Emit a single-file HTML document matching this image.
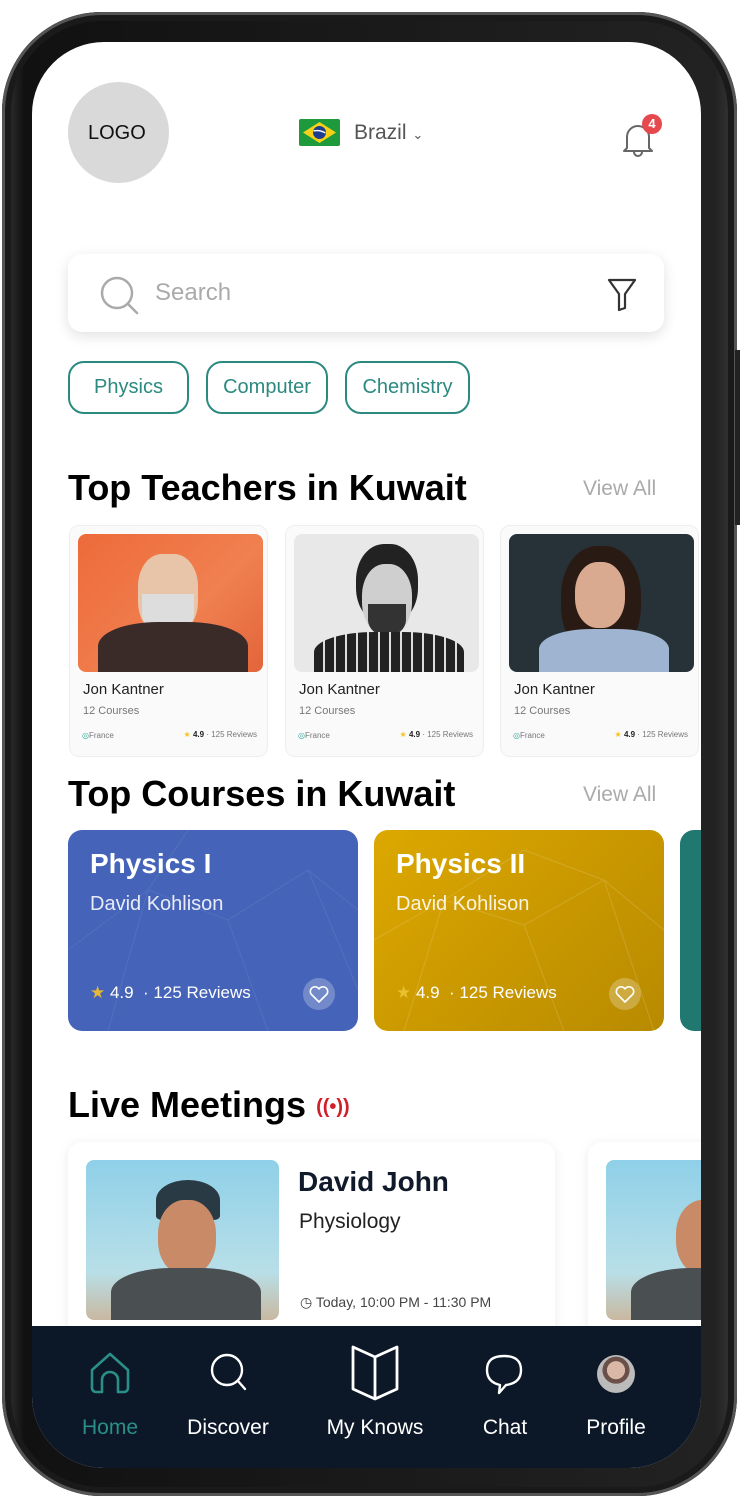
<!DOCTYPE html>
<html><head><meta charset="utf-8">
<style>
*{margin:0;padding:0;box-sizing:border-box}
body{width:740px;height:1498px;background:#fff;font-family:"Liberation Sans",sans-serif;position:relative;overflow:hidden}
.abs{position:absolute}
.frame{left:2px;top:12px;width:735px;height:1484px;border-radius:100px;background:linear-gradient(90deg,#3a3a3a,#111 3%,#222 97%,#3a3a3a);box-shadow:inset 0 0 0 3px #555,inset 0 0 0 9px #1a1a1a}
.screen{left:32px;top:42px;width:669px;height:1426px;border-radius:72px;background:#fff;overflow:hidden}
.t{position:absolute;white-space:nowrap}
.tcard{position:absolute;top:483px;width:199px;height:232px;border:1px solid #eee;border-radius:10px;background:#fafafa}
.tcard .ph{position:absolute;left:8px;top:8px;width:185px;height:138px;border-radius:8px;overflow:hidden}
.tcard .nm{left:13px;top:155px;font-size:15px;color:#222}
.tcard .cr{left:13px;top:179px;font-size:11px;color:#777}
.tcard .fr{left:12px;top:205px;font-size:8px;color:#777}
.tcard .rv{right:10px;top:204px;font-size:8px;color:#777}
.ccard{position:absolute;top:788px;width:290px;height:201px;border-radius:14px;overflow:hidden}
.ccard .h{left:22px;top:18px;font-size:28px;color:#fff;font-weight:bold}
.ccard .s{left:22px;top:63px;font-size:20px;color:rgba(255,255,255,.88)}
.ccard .r{left:22px;top:153px;font-size:17px;color:#fff}
.heart{position:absolute;left:235px;top:148px;width:32px;height:32px;border-radius:50%;background:rgba(255,255,255,.25)}
.chip{position:absolute;top:319px;height:53px;border:2px solid #2b8a80;border-radius:16px;color:#2b8a80;font-size:20px;line-height:49px;text-align:center}
.nav{left:0;top:1284px;width:669px;height:142px;background:#0c1828}
.nl{position:absolute;top:1374px;font-size:21px;color:#fff;text-align:center}
</style></head><body>
<div class="abs frame"></div>
<div class="abs" style="left:735px;top:350px;width:5px;height:175px;background:#222"></div>
<div class="abs screen">
  <div class="abs" style="left:36px;top:40px;width:101px;height:101px;border-radius:50%;background:#d9d9d9"></div>
  <div class="t" style="left:56px;top:80px;font-size:20px;color:#111">LOGO</div>
  <svg class="abs" style="left:267px;top:77px" width="41" height="27" viewBox="0 0 41 27"><rect width="41" height="27" rx="2" fill="#1e9a3c"/><path d="M20.5 3 L37 13.5 L20.5 24 L4 13.5Z" fill="#f7d117"/><circle cx="20.5" cy="13.5" r="6.5" fill="#1d3e8f"/><path d="M14.5 12 Q20.5 10.5 26.5 14" stroke="#fff" stroke-width="1.3" fill="none"/></svg>
  <div class="t" style="left:322px;top:79px;font-size:21px;color:#555">Brazil <span style="font-size:13px">⌄</span></div>
  <svg class="abs" style="left:588px;top:76px" width="36" height="42" viewBox="0 0 36 42"><path d="M7 30 V19 a11 11 0 0 1 22 0 V30 l3 3 H4 Z" fill="none" stroke="#666" stroke-width="2" stroke-linejoin="round"/><path d="M14 34 a4 4 0 0 0 8 0" fill="none" stroke="#666" stroke-width="2"/></svg>
  <div class="abs" style="left:610px;top:72px;width:20px;height:20px;border-radius:50%;background:#e5484d;color:#fff;font-size:13px;text-align:center;line-height:20px;font-weight:bold">4</div>

  <div class="abs" style="left:36px;top:212px;width:596px;height:78px;border-radius:14px;background:#fff;box-shadow:0 4px 14px rgba(0,0,0,.12)"></div>
  <svg class="abs" style="left:67px;top:233px" width="42" height="42" viewBox="0 0 42 42"><circle cx="18" cy="18" r="15" fill="none" stroke="#aaa" stroke-width="2.5"/><path d="M29 29 L38 38" stroke="#aaa" stroke-width="2.5" stroke-linecap="round"/></svg>
  <div class="t" style="left:123px;top:237px;font-size:24px;color:#aaa">Search</div>
  <svg class="abs" style="left:574px;top:235px" width="32" height="36" viewBox="0 0 32 36"><path d="M3 3 H29 L19 17 V31 L13 33 V17 Z" fill="none" stroke="#333" stroke-width="2.2" stroke-linejoin="round"/></svg>

  <div class="chip" style="left:36px;width:121px">Physics</div>
  <div class="chip" style="left:174px;width:122px">Computer</div>
  <div class="chip" style="left:313px;width:125px">Chemistry</div>

  <div class="t" style="left:36px;top:425px;font-size:36px;font-weight:bold;color:#000">Top Teachers in Kuwait</div>
  <div class="t" style="left:551px;top:435px;font-size:21px;color:#aaa">View All</div>

  <div class="tcard" style="left:37px"><div class="ph" style="background:linear-gradient(135deg,#ee6a3a,#f08050 60%,#e2643a)">
    <div class="abs" style="left:60px;top:20px;width:60px;height:80px;border-radius:40%;background:#e8c4a8"></div>
    <div class="abs" style="left:64px;top:60px;width:52px;height:40px;border-radius:0 0 50% 50%;background:#ddd"></div>
    <div class="abs" style="left:20px;top:88px;width:150px;height:60px;border-radius:40% 40% 0 0;background:#3a2a28"></div></div>
    <div class="t nm">Jon Kantner</div><div class="t cr">12 Courses</div><div class="t fr"><span style="color:#3aa89b">◎</span>France</div><div class="t rv"><span style="color:#f5c518">★</span> <b style="color:#222">4.9</b> · 125 Reviews</div></div>
  <div class="tcard" style="left:253px"><div class="ph" style="background:#e8e8e8">
    <div class="abs" style="left:62px;top:10px;width:62px;height:80px;border-radius:45%;background:#222"></div>
    <div class="abs" style="left:68px;top:30px;width:50px;height:70px;border-radius:45%;background:#cfcfcf"></div>
    <div class="abs" style="left:74px;top:70px;width:38px;height:32px;border-radius:0 0 50% 50%;background:#333"></div>
    <div class="abs" style="left:20px;top:98px;width:150px;height:50px;border-radius:40% 40% 0 0;background:repeating-linear-gradient(90deg,#222 0 9px,#ddd 9px 11px)"></div></div>
    <div class="t nm">Jon Kantner</div><div class="t cr">12 Courses</div><div class="t fr"><span style="color:#3aa89b">◎</span>France</div><div class="t rv"><span style="color:#f5c518">★</span> <b style="color:#222">4.9</b> · 125 Reviews</div></div>
  <div class="tcard" style="left:468px"><div class="ph" style="background:#263238">
    <div class="abs" style="left:52px;top:12px;width:80px;height:110px;border-radius:45%;background:#2a1a14"></div>
    <div class="abs" style="left:66px;top:28px;width:50px;height:66px;border-radius:45%;background:#d9a990"></div>
    <div class="abs" style="left:30px;top:95px;width:130px;height:50px;border-radius:40% 40% 0 0;background:#9fb4d0"></div></div>
    <div class="t nm">Jon Kantner</div><div class="t cr">12 Courses</div><div class="t fr"><span style="color:#3aa89b">◎</span>France</div><div class="t rv"><span style="color:#f5c518">★</span> <b style="color:#222">4.9</b> · 125 Reviews</div></div>

  <div class="t" style="left:36px;top:731px;font-size:36px;font-weight:bold;color:#000">Top Courses in Kuwait</div>
  <div class="t" style="left:551px;top:741px;font-size:21px;color:#aaa">View All</div>

  <div class="ccard" style="left:36px;background:#4563b8">
    <svg class="abs" style="left:0;top:0" width="290" height="201"><path d="M0 120 L80 60 L160 90 L240 40 L290 80 M40 201 L80 60 M160 90 L200 201 M240 40 L290 160 M80 60 L120 0" stroke="rgba(255,255,255,.08)" fill="none"/></svg>
    <div class="t h">Physics I</div><div class="t s">David Kohlison</div>
    <div class="t r"><span style="color:#e5b83a">★</span> 4.9 &nbsp;· 125 Reviews</div>
    <div class="heart"><svg width="32" height="32" viewBox="0 0 32 32"><path d="M16 24 L8 16 a4.5 4.5 0 0 1 8-5 a4.5 4.5 0 0 1 8 5 Z" fill="none" stroke="#fff" stroke-width="1.6" stroke-linejoin="round"/></svg></div>
  </div>
  <div class="ccard" style="left:342px;background:linear-gradient(135deg,#dca800,#b88a00)">
    <svg class="abs" style="left:0;top:0" width="290" height="201"><path d="M0 110 L70 70 L150 95 L230 50 L290 100 M30 201 L70 70 M150 95 L190 201 M230 50 L280 201 M70 70 L150 20 L230 50" stroke="rgba(255,255,255,.15)" fill="none"/></svg>
    <div class="t h">Physics II</div><div class="t s">David Kohlison</div>
    <div class="t r"><span style="color:#e8c030">★</span> 4.9 &nbsp;· 125 Reviews</div>
    <div class="heart"><svg width="32" height="32" viewBox="0 0 32 32"><path d="M16 24 L8 16 a4.5 4.5 0 0 1 8-5 a4.5 4.5 0 0 1 8 5 Z" fill="none" stroke="#fff" stroke-width="1.6" stroke-linejoin="round"/></svg></div>
  </div>
  <div class="ccard" style="left:648px;background:#207870"></div>

  <div class="t" style="left:36px;top:1042px;font-size:36px;font-weight:bold;color:#000">Live Meetings <span style="color:#d0202a;font-size:20px;vertical-align:4px">((•))</span></div>

  <div class="abs" style="left:36px;top:1100px;width:487px;height:200px;border-radius:14px;background:#fff;box-shadow:0 2px 12px rgba(0,0,0,.08)"></div>
  <div class="abs" style="left:54px;top:1118px;width:193px;height:160px;border-radius:8px;overflow:hidden;background:linear-gradient(180deg,#8fd0e8,#b8dfe8 70%,#c9b8a0)">
    <div class="abs" style="left:70px;top:20px;width:64px;height:40px;border-radius:50% 50% 10% 10%;background:#2a3a44"></div>
    <div class="abs" style="left:72px;top:40px;width:58px;height:75px;border-radius:45%;background:#c98a68"></div>
    <div class="abs" style="left:25px;top:108px;width:150px;height:60px;border-radius:40% 40% 0 0;background:#4a4f52"></div></div>
  <div class="t" style="left:266px;top:1124px;font-size:28px;font-weight:bold;color:#111a2a">David John</div>
  <div class="t" style="left:267px;top:1168px;font-size:21px;color:#222">Physiology</div>
  <div class="t" style="left:268px;top:1252px;font-size:14px;color:#444">◷ Today, 10:00 PM - 11:30 PM</div>
  <div class="abs" style="left:556px;top:1100px;width:200px;height:200px;border-radius:14px;background:#fff;box-shadow:0 2px 12px rgba(0,0,0,.08)"></div>
  <div class="abs" style="left:574px;top:1118px;width:120px;height:160px;border-radius:8px;overflow:hidden;background:linear-gradient(180deg,#8fd0e8,#b8dfe8 70%,#c9b8a0)">
    <div class="abs" style="left:70px;top:40px;width:58px;height:75px;border-radius:45%;background:#c98a68"></div>
    <div class="abs" style="left:25px;top:108px;width:150px;height:60px;border-radius:40% 40% 0 0;background:#4a4f52"></div></div>

  <div class="abs nav"></div>
  <svg class="abs" style="left:56px;top:1308px" width="44" height="46" viewBox="0 0 44 46"><path d="M4 20 L22 4 L40 20 V38 a4 4 0 0 1 -4 4 H30 V30 a8 8 0 0 0 -16 0 V42 H8 a4 4 0 0 1 -4 -4 Z" fill="none" stroke="#2a8f88" stroke-width="2.6" stroke-linejoin="round"/></svg>
  <svg class="abs" style="left:176px;top:1310px" width="42" height="42" viewBox="0 0 42 42"><circle cx="19" cy="18" r="15" fill="none" stroke="#fff" stroke-width="2.4"/><path d="M30 29 L37 37" stroke="#fff" stroke-width="2.4" stroke-linecap="round"/></svg>
  <svg class="abs" style="left:316px;top:1301px" width="54" height="60" viewBox="0 0 54 60"><path d="M27 14 L5 4 V46 L27 56 L49 46 V4 Z M27 14 V56" fill="none" stroke="#fff" stroke-width="2.8" stroke-linejoin="round"/></svg>
  <svg class="abs" style="left:452px;top:1310px" width="42" height="44" viewBox="0 0 42 44"><path d="M16 33 Q3 30 3 18 Q3 4 20 4 Q37 4 37 18 Q37 31 22 33 L15 41 Z" fill="none" stroke="#fff" stroke-width="2.4" stroke-linejoin="round"/></svg>
  <div class="abs" style="left:565px;top:1313px;width:38px;height:38px;border-radius:50%;background:radial-gradient(circle at 50% 40%,#d9b8a8 0 30%,#6a5048 31% 45%,#bbb 46%)"></div>
  <div class="nl" style="left:28px;width:100px;color:#2a8f88">Home</div>
  <div class="nl" style="left:146px;width:100px">Discover</div>
  <div class="nl" style="left:283px;width:120px">My Knows</div>
  <div class="nl" style="left:423px;width:100px">Chat</div>
  <div class="nl" style="left:534px;width:100px">Profile</div>
</div>
</body></html>
